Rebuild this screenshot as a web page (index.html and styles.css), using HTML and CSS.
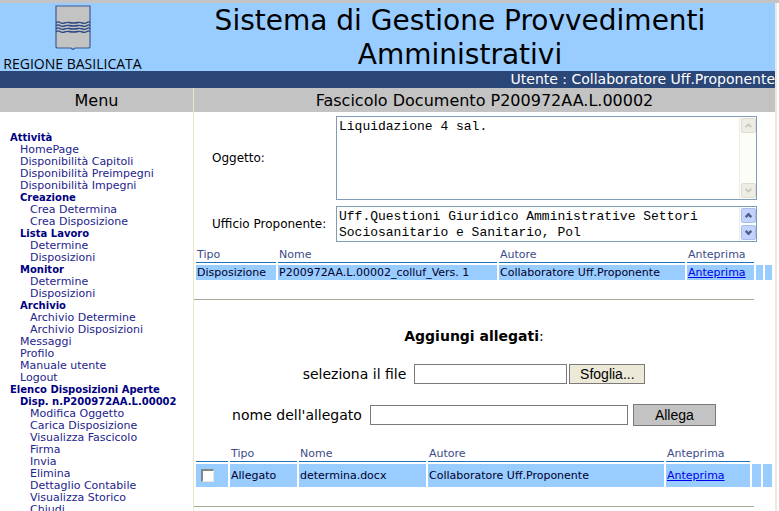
FILE: index.html
```html
<!DOCTYPE html>
<html lang="it">
<head>
<meta charset="utf-8">
<title>Sistema di Gestione Provvedimenti Amministrativi</title>
<link rel="stylesheet" href="styles.css">
</head>
<body>
<div class="window">
  <div class="page">
    <header class="banner">
      <div class="brand">
        <svg class="shield" viewBox="0 0 36 45" aria-hidden="true">
          <path d="M1 1H35V42Q35 43 33 43H20L18 44.500L16 43H3Q1 43 1 42Z" fill="#c3c3c3" stroke="#3f5a91" stroke-width="1.200"/>
          <g fill="none" stroke="#2c4a85" stroke-width="1.400">
            <path d="M1 18Q3 16 5 17.500T9.500 18T14 17.500T18.500 18T23 17.500T27.500 18T32 17.500T35 18"/>
            <path d="M1 21Q3 19 5 20.500T9.500 21T14 20.500T18.500 21T23 20.500T27.500 21T32 20.500T35 21"/>
            <path d="M1 24Q3 22 5 23.500T9.500 24T14 23.500T18.500 24T23 23.500T27.500 24T32 23.500T35 24"/>
            <path d="M1 27Q3 25 5 26.500T9.500 27T14 26.500T18.500 27T23 26.500T27.500 27T32 26.500T35 27"/>
          </g>
        </svg>
        <span class="region">REGIONE BASILICATA</span>
      </div>
      <h1 class="title">Sistema di Gestione Provvedimenti Amministrativi</h1>
    </header>
    <div class="userbar">Utente : Collaboratore Uff.Proponente</div>
    <div class="columns">
      <nav class="side">
        <h2 class="bar">Menu</h2>
        <ul class="menu">
          <li><b>Attività</b>
            <ul>
              <li><a href="#">HomePage</a></li>
              <li><a href="#">Disponibilità Capitoli</a></li>
              <li><a href="#">Disponibilità Preimpegni</a></li>
              <li><a href="#">Disponibilità Impegni</a></li>
              <li><b>Creazione</b>
                <ul>
                  <li><a href="#">Crea Determina</a></li>
                  <li><a href="#">Crea Disposizione</a></li>
                </ul>
              </li>
              <li><b>Lista Lavoro</b>
                <ul>
                  <li><a href="#">Determine</a></li>
                  <li><a href="#">Disposizioni</a></li>
                </ul>
              </li>
              <li><b>Monitor</b>
                <ul>
                  <li><a href="#">Determine</a></li>
                  <li><a href="#">Disposizioni</a></li>
                </ul>
              </li>
              <li><b>Archivio</b>
                <ul>
                  <li><a href="#">Archivio Determine</a></li>
                  <li><a href="#">Archivio Disposizioni</a></li>
                </ul>
              </li>
              <li><a href="#">Messaggi</a></li>
              <li><a href="#">Profilo</a></li>
              <li><a href="#">Manuale utente</a></li>
              <li><a href="#">Logout</a></li>
            </ul>
          </li>
          <li><b>Elenco Disposizioni Aperte</b>
            <ul>
              <li><b>Disp. n.P200972AA.L.00002</b>
                <ul>
                  <li><a href="#">Modifica Oggetto</a></li>
                  <li><a href="#">Carica Disposizione</a></li>
                  <li><a href="#">Visualizza Fascicolo</a></li>
                  <li><a href="#">Firma</a></li>
                  <li><a href="#">Invia</a></li>
                  <li><a href="#">Elimina</a></li>
                  <li><a href="#">Dettaglio Contabile</a></li>
                  <li><a href="#">Visualizza Storico</a></li>
                  <li><a href="#">Chiudi</a></li>
                </ul>
              </li>
            </ul>
          </li>
        </ul>
      </nav>
      <main class="content">
        <h2 class="bar">Fascicolo Documento P200972AA.L.00002</h2>
        <div class="details">
          <label for="oggetto">Oggetto:</label>
          <div class="area tall">
            <textarea id="oggetto">Liquidazione 4 sal.</textarea>
            <div class="scroll off" aria-hidden="true">
              <svg viewBox="0 0 15 16"><path d="M4 10L7.500 6.500L11 10"/></svg>
              <svg viewBox="0 0 15 16"><path d="M4 6L7.500 9.500L11 6"/></svg>
            </div>
          </div>
          <label for="ufficio">Ufficio Proponente:</label>
          <div class="area short">
            <textarea id="ufficio">Uff.Questioni Giuridico Amministrative Settori
Sociosanitario e Sanitario, Pol</textarea>
            <div class="scroll" aria-hidden="true">
              <svg viewBox="0 0 15 16"><path d="M4 10L7.500 6.500L11 10"/></svg>
              <svg viewBox="0 0 15 16"><path d="M4 6L7.500 9.500L11 6"/></svg>
            </div>
          </div>
        </div>
        <table class="grid docs">
          <colgroup><col class="w80"><col><col class="w186"><col class="w67"><col class="w7"><col class="w7"></colgroup>
          <thead><tr><th>Tipo</th><th>Nome</th><th>Autore</th><th>Anteprima</th><td></td><td></td></tr></thead>
          <tbody><tr><td>Disposizione</td><td>P200972AA.L.00002_colluf_Vers. 1</td><td>Collaboratore Uff.Proponente</td><td><a href="#">Anteprima</a></td><td></td><td></td></tr></tbody>
        </table>
        <hr class="rule">
        <form class="attach">
          <h3 class="subtitle"><b>Aggiungi allegati</b>:</h3>
          <div class="line file">
            <label for="file">seleziona il file</label>
            <input id="file" type="text">
            <button type="button" class="browse">Sfoglia...</button>
          </div>
          <div class="line name">
            <label for="nome">nome dell'allegato</label>
            <input id="nome" type="text">
            <button type="button" class="add">Allega</button>
          </div>
        </form>
        <table class="grid files">
          <colgroup><col class="w32"><col class="w67"><col class="w127"><col><col class="w84"><col class="w9"><col class="w9"></colgroup>
          <thead><tr><th></th><th>Tipo</th><th>Nome</th><th>Autore</th><th>Anteprima</th><td></td><td></td></tr></thead>
          <tbody><tr><td><input type="checkbox" class="pick" aria-label="determina.docx"></td><td>Allegato</td><td>determina.docx</td><td>Collaboratore Uff.Proponente</td><td><a href="#">Anteprima</a></td><td></td><td></td></tr></tbody>
        </table>
        <hr class="rule">
      </main>
    </div>
  </div>
</div>
</body>
</html>
```
FILE: styles.css
```css
* { box-sizing: border-box; }

body {
  margin: 0;
  background: #fff;
  color: #000;
  font-family: Verdana, "DejaVu Sans", sans-serif;
}

.window {
  height: 100vh;
  overflow: hidden;
  padding-right: 2px;
  border: solid #7b8794;
  border-image: linear-gradient(#c4c4c4 60%, #66788c 70%) 3;
  border-width: 3px 0 0;
}

.page {
  min-height: 100%;
  border-right: 2px solid #ece9e0;
}

.banner {
  display: grid;
  grid-template-columns: 145px 1fr;
  height: 68px;
  background: #99ccff;
}

.brand {
  display: flex;
  flex-direction: column;
  align-items: center;
  padding-top: 2px;
}

.shield { width: 36px; height: 45px; }

.region {
  margin-top: 6px;
  font: 500 14px/16px "Open Sans", sans-serif;
  white-space: nowrap;
}

.title {
  margin: 0;
  padding: 1px 0 0;
  font-size: 28px;
  line-height: 34px;
  font-weight: 400;
  text-align: center;
}

.userbar {
  height: 17px;
  background: #2b4778;
  color: #fff;
  font-size: 14px;
  line-height: 17px;
  text-align: right;
}

.columns {
  display: grid;
  grid-template-columns: 194px 1fr;
}

.side { border-right: 1px solid #ebe7cf; }

.bar {
  margin: 0;
  padding-top: 2px;
  background: #c3c3c3;
  font-size: 16px;
  line-height: 22px;
  font-weight: 400;
  text-align: center;
}

.menu {
  margin: 0;
  padding: 20px 0 0 10px;
  font-size: 10px;
  line-height: 12px;
  color: #000080;
  list-style: none;
  white-space: nowrap;
}

.menu ul { margin: 0; padding: 0 0 0 10px; list-style: none; }
.menu a { display: block; color: #24248c; font-size: 11px; text-decoration: none; }
.menu b { display: block; }

.details {
  display: grid;
  grid-template-columns: 124px 1fr;
  row-gap: 6px;
  align-items: center;
  padding: 4px 18px 0;
  font-size: 12px;
}

.area { position: relative; }
.tall { height: 84px; }
.short { height: 36px; }

.area textarea {
  display: block;
  width: 100%;
  height: 100%;
  padding: 2px 18px 0 2px;
  border: 1px solid #7f9db9;
  background: #fff;
  font: 13px/16px "Liberation Mono", monospace;
  color: #000;
  resize: none;
  overflow: hidden;
}

.scroll {
  position: absolute;
  top: 1px;
  right: 1px;
  bottom: 1px;
  display: flex;
  flex-direction: column;
  justify-content: space-between;
  width: 17px;
  padding: 1px;
  background: #fdfdf8;
  border-left: 1px solid #eeede5;
}

.scroll svg {
  width: 15px;
  height: 15px;
  background: #c3d3fd;
  border: 1px solid #a9bdeb;
  border-radius: 2px;
  fill: none;
  stroke: #4d6185;
  stroke-width: 3;
}

.scroll.off svg { background: #eeede5; border-color: #dddccf; stroke: #c5c4b8; stroke-width: 2; }

.grid {
  width: calc(100% - 1px);
  table-layout: fixed;
  border-spacing: 2px;
  font-size: 11px;
  line-height: 12px;
  white-space: nowrap;
}

.grid th {
  height: 16px;
  padding: 0 1px;
  border-bottom: 1px solid #1e72b8;
  color: #3c4c88;
  font-weight: 400;
  text-align: left;
}

.grid td { padding: 0 1px; }
.grid tbody td { height: 15px; background: #99ccff; color: #00002c; }
.grid a { color: #0000ee; }

.docs { margin-top: 3px; }
.grid.files tbody td { height: 23px; }

.w7 { width: 7px; }
.w9 { width: 9px; }
.w32 { width: 32px; }
.w67 { width: 67px; }
.w80 { width: 80px; }
.w84 { width: 84px; }
.w127 { width: 127px; }
.w186 { width: 186px; }

.pick {
  display: block;
  appearance: none;
  width: 13px;
  height: 13px;
  margin: 0 0 0 4px;
  border: 1px solid #e8e6dc;
  border-top: 2px solid #858585;
  border-left: 2px solid #858585;
  background: #fff;
}

.rule {
  height: 1px;
  margin: 17px 21px 0 0;
  border: 0;
  background: #aaa999;
}

.attach { margin-right: 21px; padding-top: 26px; }

.subtitle {
  margin: 0;
  font-size: 14px;
  line-height: 20px;
  font-weight: 400;
  text-align: center;
}

.line {
  display: flex;
  justify-content: center;
  align-items: center;
  height: 22px;
  font-size: 14px;
}

.line label { margin-right: 8px; }

.line input {
  width: 153px;
  height: 20px;
  padding: 0 2px;
  border: 1px solid #7a7a7a;
  background: #fff;
}

.line button {
  height: 20px;
  padding: 0;
  border: 1px solid #7a7a7a;
  font: 14px "Liberation Sans", sans-serif;
  color: #000;
}

.file { margin-top: 17px; }
.file .browse { width: 76px; margin-left: 2px; background: #ece9d8; }
.name { margin-top: 19px; }
.name input { width: 258px; }
.name .add { width: 83px; height: 22px; margin-left: 5px; background: #c3c3c3; }

.files { margin-top: 18px; }
```
